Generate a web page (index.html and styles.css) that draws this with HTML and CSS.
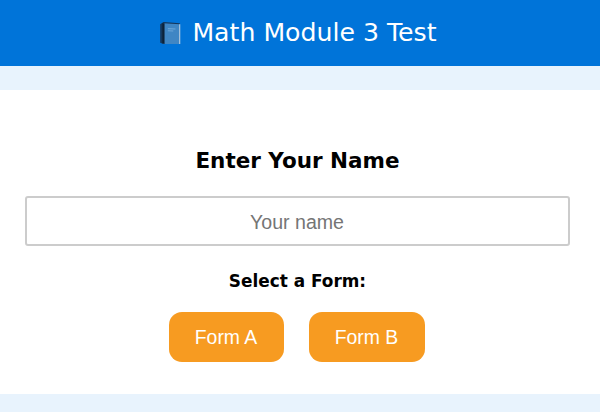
FILE: index.html
```html
<!DOCTYPE html>
<html lang="en">

<head>
    <meta charset="UTF-8">
    <meta name="viewport" content="width=device-width, initial-scale=1.0">
    <title>Math Module 3 Test</title>
    <link rel="stylesheet" href="styles.css">
</head>

<body>
    <header class="topBar">
        <svg class="bookIcon" viewBox="0 0 20 22" width="22" height="24" aria-hidden="true">
            <path d="M1 3 L4 1 L19 2 L19 21 L4 21 L1 20 Z" fill="#14375c" />
            <path d="M4 2 L19 3 L19 21 L4 21 Z" fill="#3f86c4" />
            <path d="M3 2 L5 2 L5 21 L3 20.5 Z" fill="#0c2238" />
            <path d="M8 7 L15 7.3 M8 9 L13 9.2" stroke="#6ba6d8" stroke-width="1" fill="none" />
            <path d="M18.4 3 L19.4 3 L19.4 21 L18.4 21 Z" fill="#b9cfe2" />
        </svg>
        <h1>Math Module 3 Test</h1>
    </header>

    <main class="card">
        <h2>Enter Your Name</h2>
        <input class="nameInput" type="text" placeholder="Your name">
        <h3>Select a Form:</h3>
        <div class="formButtons">
            <button class="formBtn formA">Form A</button>
            <button class="formBtn formB">Form B</button>
        </div>
    </main>
</body>

</html>
```

FILE: styles.css
```css
body {
    font-family: "Comic Sans MS", "DejaVu Sans", sans-serif;
    background-color: #e8f3fd;
    margin: 0;
    height: 412px;
    overflow: hidden;
}

.topBar {
    background-color: #0074d9;
    color: #fff;
    height: 66px;
    padding-right: 4px;
    box-sizing: border-box;
    display: flex;
    justify-content: center;
    align-items: center;
    gap: 11px;
}

.bookIcon {
    flex: none;
}

h1 {
    margin: 0;
    font-size: 25.2px;
    font-weight: 400;
    line-height: 32px;
}

.card {
    background-color: #fff;
    margin-top: 24px;
    height: 304px;
    padding: 56px 30px 0 25px;
    box-sizing: border-box;
    display: flex;
    flex-direction: column;
    align-items: center;
}

h2 {
    margin: 0 0 20px;
    font-size: 21.5px;
    line-height: 30px;
    color: #000;
}

.nameInput {
    width: 100%;
    height: 50px;
    box-sizing: border-box;
    border: 2px solid #ccc;
    border-radius: 3px;
    outline: none;
    padding: 2px 11px 0 10px;
    font-family: "Liberation Sans", Arial, sans-serif;
    font-size: 19.6px;
    text-align: center;
}

.nameInput::placeholder {
    color: #757575;
}

h3 {
    margin: 23px 0 19px;
    font-size: 16.9px;
    line-height: 24px;
    color: #000;
}

.formButtons {
    display: flex;
    gap: 25px;
    margin-right: 2px;
}

.formBtn {
    height: 50px;
    border: none;
    border-radius: 13px;
    background-color: #f79b21;
    color: #fff;
    font-family: "Liberation Sans", Arial, sans-serif;
    font-size: 19.4px;
    padding: 0;
}

.formA {
    width: 115px;
}

.formB {
    width: 116px;
}
```
